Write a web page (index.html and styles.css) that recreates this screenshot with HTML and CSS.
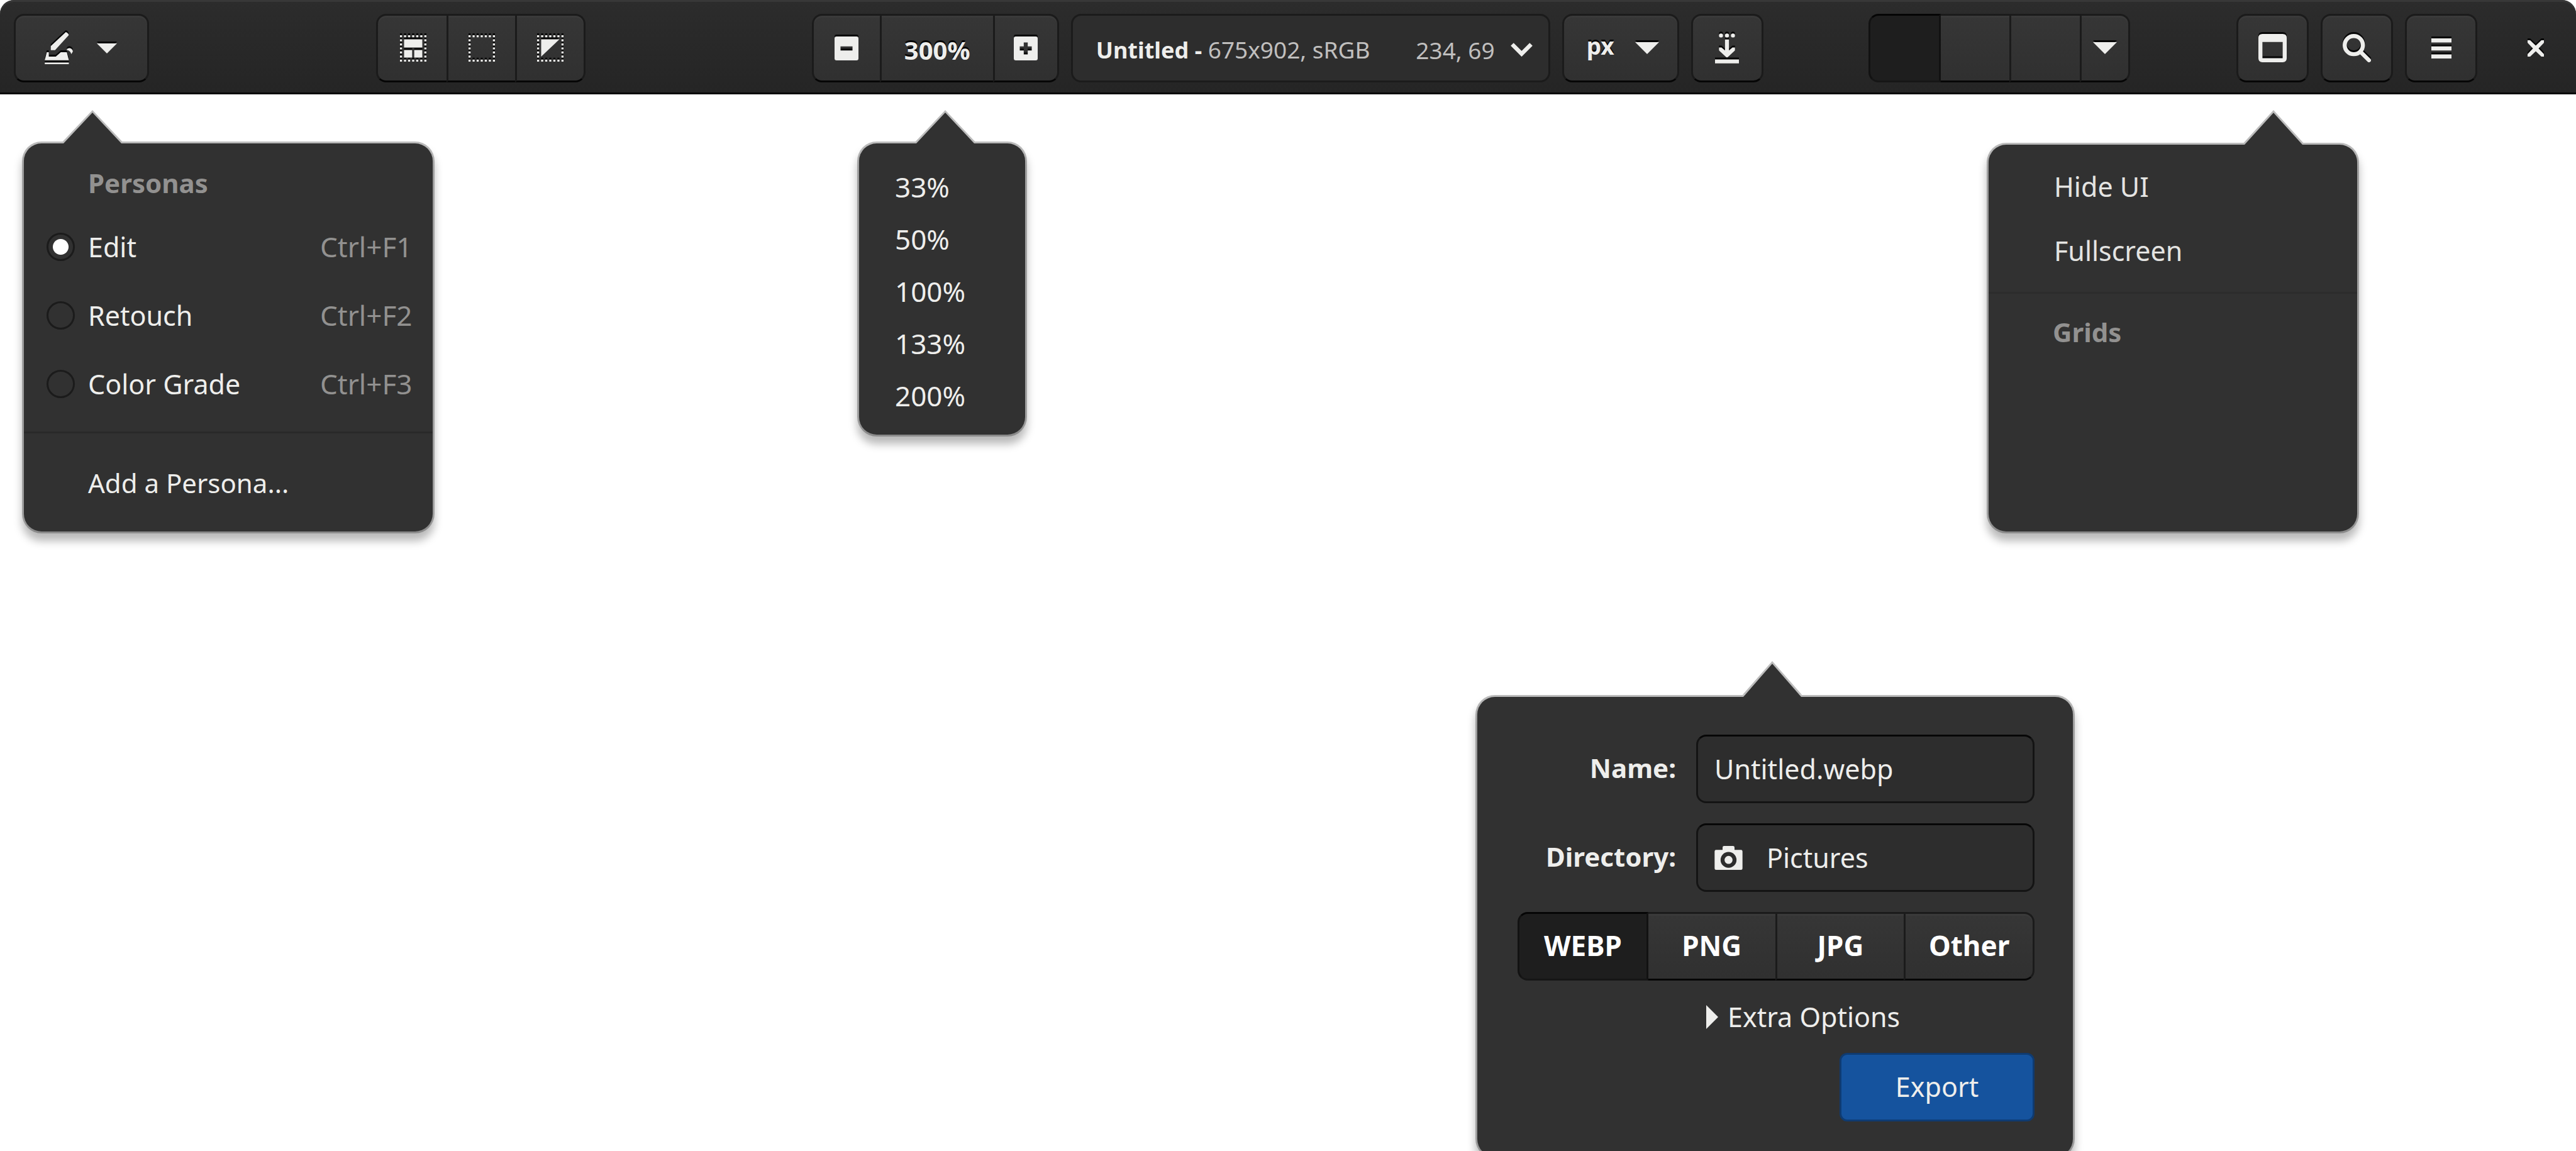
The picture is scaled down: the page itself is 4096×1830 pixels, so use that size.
FILE: index.html
```html
<!DOCTYPE html>
<html lang="en">
<head>
<meta charset="utf-8">
<meta name="viewport" content="width=device-width, initial-scale=1">
<title>Untitled - 675x902, sRGB</title>
<link rel="stylesheet" href="styles.css">
</head>
<body>
<header class="headerbar">
  <button class="btn persona-btn" type="button" aria-label="Persona" aria-haspopup="menu">
    <svg class="icon persona-icon" viewBox="0 0 56 64"><path d="M42 0C45 1 47 3 48 6L20.500 36H12V28ZM4 40H8V49H22L32 40H44L48 56H0ZM0 61H48V64H0ZM43.500 36C46 29 56 32 56 39L53 44C51 38 48 36 43.500 36Z"/></svg>
    <svg class="icon caret-small" viewBox="0 0 40 20"><path d="M0 0H40L20 20Z"/></svg>
  </button>

  <div class="segments select-tools">
    <button class="btn" type="button" aria-label="Select all"><svg class="icon select-icon" viewBox="0 0 52 52"><path class="dots" d="M0 2H52M0 50H52"/><path class="dots" d="M2 8V48M50 8V48"/><path d="M8 8H44V24H8ZM8 29H24V44H8ZM28 29H44V44H28Z"/></svg></button>
    <button class="btn" type="button" aria-label="Select none"><svg class="icon select-icon" viewBox="0 0 52 52"><path class="dots" d="M0 2H52M0 50H52"/><path class="dots" d="M2 8V48M50 8V48"/></svg></button>
    <button class="btn" type="button" aria-label="Invert selection"><svg class="icon select-icon" viewBox="0 0 52 52"><path class="dots" d="M0 2H52M0 50H52"/><path class="dots" d="M2 8V48M50 8V48"/><path d="M8 8H44L8 42Z"/></svg></button>
  </div>

  <div class="document-tools">
    <div class="segments zoom-tools">
      <button class="btn zoom-out" type="button" aria-label="Zoom out"><svg class="icon zoom-icon" viewBox="0 0 48 48"><path fill-rule="evenodd" d="M4 0H44Q48 0 48 4V44Q48 48 44 48H4Q0 48 0 44V4Q0 0 4 0ZM12 20V28H36V20Z"/></svg></button>
      <button class="btn zoom-level" type="button" aria-haspopup="menu">300%</button>
      <button class="btn zoom-in" type="button" aria-label="Zoom in"><svg class="icon zoom-icon" viewBox="0 0 48 48"><path fill-rule="evenodd" d="M4 0H44Q48 0 48 4V44Q48 48 44 48H4Q0 48 0 44V4Q0 0 4 0ZM20 12V20H12V28H20V36H28V28H36V20H28V12Z"/></svg></button>
    </div>
    <button class="title-entry" type="button">
      <span class="title-text"><b>Untitled -</b> 675x902, sRGB</span>
      <span class="title-position">234, 69</span>
      <svg class="chevron" viewBox="0 0 43 27"><path d="M3 3L21.500 21.500L40 3"/></svg>
    </button>
    <div class="unit">
      <select class="btn unit-select" aria-label="Unit"><option>px</option><option>mm</option><option>in</option></select>
      <svg class="icon caret" viewBox="0 0 48 24"><path d="M0 0H48L24 24Z"/></svg>
    </div>
    <button class="btn square" type="button" aria-label="Save"><svg class="icon save-icon" viewBox="0 0 48 60"><circle cx="12" cy="4" r="4"/><circle cx="24" cy="4" r="4"/><circle cx="36" cy="4" r="4"/><path d="M20 12H28V34L35 28H40V33Q40 34 39 35L26 47Q24 49 22 47L9 35Q8 34 8 33V28H13L20 34ZM0 52H48V60H0Z"/></svg></button>
  </div>

  <div class="segments swatches">
    <button class="btn swatch active" type="button" aria-label="Split view one" aria-pressed="true"></button>
    <button class="btn swatch" type="button" aria-label="Split view two"></button>
    <button class="btn swatch" type="button" aria-label="Split view three"></button>
    <button class="btn swatch-more" type="button" aria-label="More views"><svg class="icon caret" viewBox="0 0 48 24"><path d="M0 0H48L24 24Z"/></svg></button>
  </div>

  <div class="window-tools">
    <button class="btn square" type="button" aria-label="View" aria-haspopup="menu"><svg class="icon window-icon" viewBox="0 0 56 56"><path fill-rule="evenodd" d="M8 0H48Q56 0 56 8V48Q56 56 48 56H8Q0 56 0 48V8Q0 0 8 0ZM8 16V48H48V16Z"/></svg></button>
    <button class="btn square" type="button" aria-label="Search"><svg class="icon window-icon" viewBox="0 0 56 56"><circle class="line" cx="22" cy="22" r="18"/><path class="line round" d="M36 36L52 52"/></svg></button>
    <button class="btn square" type="button" aria-label="Menu"><svg class="icon menu-icon" viewBox="0 0 40 40"><path d="M0 0H40V8H0ZM0 16H40V24H0ZM0 32H40V40H0Z"/></svg></button>
    <button class="close" type="button" aria-label="Close"><svg class="icon close-icon" viewBox="0 0 32 32"><path d="M0 0H5L16 10.500L27 0H32V5L21.500 16L32 27V32H27L16 21.500L5 32H0V27L10.500 16L0 5Z"/></svg></button>
  </div>
</header>

<main>
  <section class="popover personas" aria-label="Personas">
    <svg class="arrow" viewBox="0 0 100 53" preserveAspectRatio="none"><path class="arrow-edge" d="M50 0L97.300 50H2.700Z"/><path class="arrow-fill" d="M50 4L96 53H4Z"/></svg>
    <h2 class="menu-heading">Personas</h2>
    <div class="persona-list">
      <label class="persona-row"><input class="radio" type="radio" name="persona" checked><span>Edit</span><kbd>Ctrl+F1</kbd></label>
      <label class="persona-row"><input class="radio" type="radio" name="persona"><span>Retouch</span><kbd>Ctrl+F2</kbd></label>
      <label class="persona-row"><input class="radio" type="radio" name="persona"><span>Color Grade</span><kbd>Ctrl+F3</kbd></label>
    </div>
    <hr class="separator">
    <button class="menu-item add-persona" type="button">Add a Persona...</button>
  </section>

  <section class="popover zoom-menu" aria-label="Zoom">
    <svg class="arrow" viewBox="0 0 100 53" preserveAspectRatio="none"><path class="arrow-edge" d="M50 0L97.300 50H2.700Z"/><path class="arrow-fill" d="M50 4L96 53H4Z"/></svg>
    <button class="menu-item" type="button">33%</button>
    <button class="menu-item" type="button">50%</button>
    <button class="menu-item" type="button">100%</button>
    <button class="menu-item" type="button">133%</button>
    <button class="menu-item" type="button">200%</button>
  </section>

  <section class="popover view-menu" aria-label="View">
    <svg class="arrow" viewBox="0 0 100 53" preserveAspectRatio="none"><path class="arrow-edge" d="M50 0L97.300 50H2.700Z"/><path class="arrow-fill" d="M50 4L96 53H4Z"/></svg>
    <div class="view-items">
      <button class="menu-item" type="button">Hide UI</button>
      <button class="menu-item" type="button">Fullscreen</button>
    </div>
    <hr class="separator">
    <h2 class="menu-heading">Grids</h2>
  </section>

  <form class="popover export" aria-label="Export">
    <svg class="arrow" viewBox="0 0 100 53" preserveAspectRatio="none"><path class="arrow-edge" d="M50 0L97.300 50H2.700Z"/><path class="arrow-fill" d="M50 4L96 53H4Z"/></svg>
    <label class="field-label" for="name">Name:</label>
    <input class="field" id="name" type="text" value="Untitled.webp">
    <label class="field-label" for="directory">Directory:</label>
    <div class="field directory">
      <svg class="camera" viewBox="0 0 56 48"><path fill-rule="evenodd" d="M19 0H37Q40 0 40 3V8H53Q56 8 56 11V45Q56 48 53 48H3Q0 48 0 45V11Q0 8 3 8H16V3Q16 0 19 0ZM28 12A16 16 0 1 0 28 44A16 16 0 1 0 28 12Z"/><circle cx="28" cy="28" r="8"/></svg>
      <select class="directory-select" id="directory"><option>Pictures</option></select>
    </div>
    <div class="segments formats" role="radiogroup" aria-label="Format">
      <label class="btn format"><input type="radio" name="format" checked>WEBP</label>
      <label class="btn format"><input type="radio" name="format">PNG</label>
      <label class="btn format"><input type="radio" name="format">JPG</label>
      <label class="btn format"><input type="radio" name="format">Other</label>
    </div>
    <button class="extra" type="button" aria-expanded="false"><svg class="disclosure" viewBox="0 0 24 48"><path d="M0 0L24 24L0 48Z"/></svg>Extra Options</button>
    <button class="submit" type="submit">Export</button>
  </form>
</main>
</body>
</html>
```
FILE: styles.css
```css
* { box-sizing: border-box; }

:root {
  --fg: #eeeeec;
  --dim: #929190;
  --panel: #313131;
  --line: #1b1b1b;
  --edge: #060606;
}

body {
  margin: 0;
  min-height: 100vh;
  background: #fff;
  color: var(--fg);
  font-family: "Noto Sans", "Open Sans", sans-serif;
  font-size: 43px;
  line-height: 57px;
  overflow: hidden;
}

button, input, select {
  margin: 0;
  padding: 0;
  border: 0;
  background: none;
  color: inherit;
  font: inherit;
}

select { appearance: none; }

svg { display: block; flex: none; fill: currentColor; }

/* Header bar */
.headerbar {
  display: grid;
  grid-template-columns: auto 361fr auto 359fr auto 167fr auto 169fr auto;
  align-items: start;
  padding: 22px 22px 16px;
  border-bottom: 3px solid #070707;
  border-radius: 22px 22px 0 0;
  background: linear-gradient(#2c2c2c, #252525);
  box-shadow: inset 0 3px #383838;
  font-size: 37px;
}

.select-tools { grid-column: 3; }
.document-tools { grid-column: 5; display: flex; gap: 19px; }
.swatches { grid-column: 7; }
.window-tools { grid-column: 9; display: flex; gap: 19px; }

.btn {
  display: flex;
  align-items: center;
  justify-content: center;
  height: 109px;
  border: 3px solid var(--line);
  border-bottom-color: var(--edge);
  border-radius: 16px;
  background: linear-gradient(#363636, #303030);
  box-shadow: inset 0 3px #3a3a3a;
  font-weight: 700;
  text-shadow: 0 -3px var(--edge);
}

.square { width: 115px; }

.segments { display: flex; }
.segments .btn { border-radius: 0; }
.segments .btn + .btn { margin-left: -3px; }
.segments .btn:first-child { border-radius: 16px 0 0 16px; }
.segments .btn:last-child { border-radius: 0 16px 16px 0; }

.segments .active,
.segments .format:has(:checked) {
  position: relative;
  z-index: 1;
  border-color: #050505 #121212 #161616;
  background: #1e1e1e;
  box-shadow: none;
}

.icon { filter: drop-shadow(0 -3px 0 var(--edge)); }

.persona-btn { width: 215px; gap: 38px; padding-right: 3px; }
.persona-icon { width: 45px; height: 51px; }
.caret-small { width: 32px; height: 16px; }
.caret { width: 38px; height: 19px; }

.select-tools .btn { width: 112px; }
.select-tools .btn:first-child { width: 115px; padding-left: 2px; }
.select-icon { width: 42px; height: 42px; }
.dots { fill: none; stroke: currentColor; stroke-width: 4; stroke-dasharray: 4 4; }

.zoom-out { width: 111px; }
.zoom-level { width: 183px; padding-top: 5px; font-size: 40px; }
.zoom-in { width: 105px; }
.zoom-icon { width: 38px; height: 38px; }

.title-entry {
  display: flex;
  align-items: center;
  width: 762px;
  height: 109px;
  padding: 5px 25px 0 37px;
  border: 3px solid var(--line);
  border-radius: 16px;
  background: #2d2d2d;
  color: #c0bfbe;
}
.title-entry b { color: var(--fg); font-size: 36px; }
.title-position { margin-left: auto; }
.chevron {
  width: 35px;
  height: 22px;
  margin-left: 25px;
  fill: none;
  stroke: var(--fg);
  stroke-width: 8;
}

.unit { display: grid; align-items: center; }
.unit-select { grid-area: 1 / 1; width: 186px; padding: 0 0 8px 36px; }
.unit .caret { grid-area: 1 / 1; justify-self: end; margin-right: 32px; pointer-events: none; }
.save-icon { width: 38px; height: 48px; }

.swatch { width: 115px; }
.swatch-more { width: 80px; }

.window-icon { width: 45px; height: 45px; }
.line { fill: none; stroke: currentColor; stroke-width: 8; }
.round { stroke-linecap: round; }
.menu-icon { width: 32px; height: 32px; }
.close {
  display: flex;
  align-items: center;
  justify-content: center;
  width: 84px;
  height: 109px;
  margin-left: 32px;
}
.close-icon { width: 26px; height: 26px; }

/* Popovers */
.popover {
  position: absolute;
  border-radius: 28px;
  background: var(--panel);
  box-shadow: 0 0 0 3px rgba(0, 0, 0, 0.26), 0 12px 14px 3px rgba(0, 0, 0, 0.28);
}

.arrow { position: absolute; bottom: 100%; width: 100px; height: 53px; }
.arrow-edge { fill: #bdbdbd; }
.arrow-fill { fill: var(--panel); }

.menu-heading { margin: 0; color: var(--dim); font-size: 42px; font-weight: 700; }
.menu-item { display: block; width: 100%; text-align: left; }
.separator { height: 3px; margin: 0; border: 0; background: #292929; }

.personas { top: 228px; left: 38px; width: 650px; }
.personas .arrow { left: 59px; }
.personas .menu-heading { padding: 34px 0 20px 102px; }
.persona-list { padding-bottom: 20px; }
.persona-row {
  display: grid;
  grid-template-columns: 45px 1fr 154px;
  column-gap: 21px;
  align-items: center;
  padding: 25px 25px 27px 36px;
}
.persona-row kbd { color: var(--dim); font: inherit; font-size: 44px; }
.radio {
  appearance: none;
  width: 45px;
  height: 45px;
  border: 3px solid var(--line);
  border-radius: 50%;
}
.radio:checked { background: radial-gradient(circle, #fff 12px, transparent 13px); }
.add-persona { padding: 50px 0 49px 102px; font-size: 42px; }

.zoom-menu { top: 228px; left: 1366px; width: 264px; padding: 28px 0 20px; font-size: 44px; }
.zoom-menu .arrow { left: 87px; }
.zoom-menu .menu-item { padding: 13px 0 13px 57px; }

.view-menu { top: 230px; right: 348px; width: 586px; min-height: 615px; }
.view-menu .arrow { right: 83px; height: 55px; }
.view-items { padding: 15px 0; color: #e4e4e2; }
.view-menu .menu-item { padding: 23px 0 22px 104px; }
.view-menu .separator { background: #2c2c2c; }
.view-menu .menu-heading { padding: 32px 0 0 102px; }

/* Export form */
.export {
  top: 1108px;
  left: 2349px;
  width: 947px;
  display: grid;
  grid-template-columns: 1fr 538px;
  gap: 32px;
  align-items: center;
  padding: 60px 61px 56px 64px;
}
.export .arrow { left: 419px; height: 57px; }
.field-label { padding-bottom: 4px; font-size: 42px; font-weight: 700; text-align: right; }
.field {
  width: 100%;
  height: 109px;
  padding: 0 26px;
  border: 3px solid #141414;
  border-top-color: #070707;
  border-radius: 16px;
  background: #2d2d2d;
}
.directory { display: flex; align-items: center; gap: 38px; }
.directory-select { flex: 1; height: 100%; }
.camera { width: 45px; height: 38px; }

.formats { grid-column: 1 / -1; }
.format { flex: 1; padding-bottom: 3px; color: #fff; font-size: 44px; text-shadow: none; }
.format input { appearance: none; width: 0; height: 0; }

.extra {
  grid-column: 2;
  display: flex;
  align-items: center;
  gap: 15px;
  padding-left: 16px;
  line-height: 51px;
}
.disclosure { width: 19px; height: 38px; }

.submit {
  grid-column: 2;
  justify-self: end;
  width: 310px;
  height: 109px;
  padding-bottom: 2px;
  border: 3px solid #0f3b71;
  border-radius: 12px;
  background: #15539e;
}
```
